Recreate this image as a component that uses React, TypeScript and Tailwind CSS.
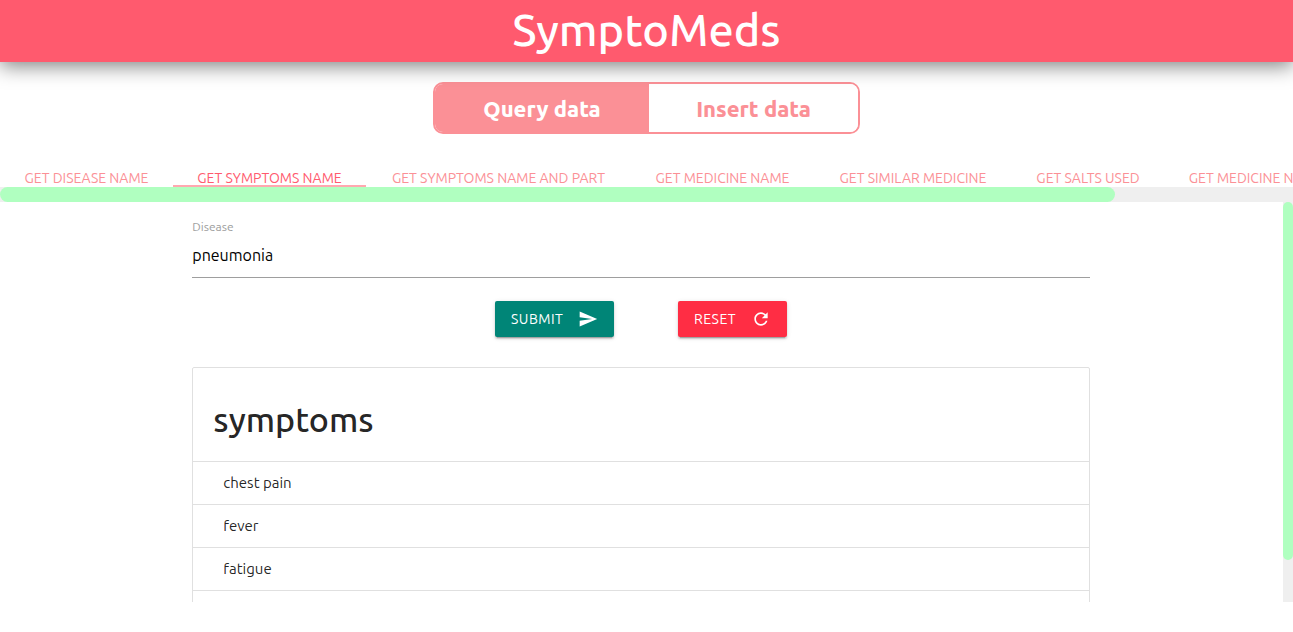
import { useState } from "react";

const tabs = [
  { label: "Get Disease Name", width: "w-[173px]" },
  { label: "Get Symptoms Name", width: "w-[193px]" },
  { label: "Get Symptoms Name and Part", width: "w-[265px]" },
  { label: "Get Medicine Name", width: "w-[183px]" },
  { label: "Get Similar Medicine", width: "w-[198px]" },
  { label: "Get Salts Used", width: "w-[152px]" },
  { label: "Get Medicine Name and Price", width: "w-[256px]" },
];

const symptoms = ["chest pain", "fever", "fatigue", "cough"];

function Header() {
  return (
    <header className="relative flex h-[62px] shrink-0 items-start justify-center bg-[#ff5a6e] shadow-[0_4px_20px_rgba(0,0,0,0.5)]">
      <h1 className="text-[45px] leading-[60px] font-medium text-white">SymptoMeds</h1>
    </header>
  );
}

function ModeSwitch() {
  return (
    <div className="mt-5 flex h-[52px] w-[427px] shrink-0 self-center overflow-hidden rounded-[10px] border-2 border-[#fb9096] text-[22px] font-extrabold">
      <button type="button" className="w-[214px] bg-[#fb9096] text-white">
        Query data
      </button>
      <button type="button" className="flex-1 bg-white text-[#fb9096]">
        Insert data
      </button>
    </div>
  );
}

function Tabs() {
  const [active, setActive] = useState(1);
  return (
    <nav className="mt-5 shrink-0">
      <ul className="flex h-[33px] overflow-hidden">
        {tabs.map((tab, i) => (
          <li key={tab.label} className={`shrink-0 ${tab.width}`}>
            <a
              href="#form"
              onClick={() => setActive(i)}
              className={`flex h-[33px] items-end justify-center border-b-2 text-sm leading-[14px] whitespace-nowrap uppercase ${
                i === active ? "border-[#ffa8b0] text-[#ff5a6e]" : "border-transparent text-[#fb9096]"
              }`}
            >
              {tab.label}
            </a>
          </li>
        ))}
      </ul>
      <div className="h-[15px] bg-[#efefef]">
        <div className="h-full w-[86.2%] rounded-[10px] bg-[#b0ffc0]" />
      </div>
    </nav>
  );
}

function QueryForm() {
  return (
    <form id="form" onSubmit={(e) => e.preventDefault()}>
      <label htmlFor="disease" className="block pt-4 text-xs leading-[18px] text-[#9e9e9e]">
        Disease
      </label>
      <input
        id="disease"
        defaultValue="pneumonia"
        className="block h-[42px] w-full border-b border-[#9e9e9e] bg-transparent pb-1 text-base text-black outline-none"
      />
      <div className="mt-[23px] flex justify-center gap-16">
        <button
          type="submit"
          className="flex h-9 w-[119px] items-center justify-between rounded-[2px] bg-[#008577] px-4 text-sm tracking-[0.5px] text-white shadow-[0_2px_2px_rgba(0,0,0,0.14),0_1px_5px_rgba(0,0,0,0.12),0_3px_1px_-2px_rgba(0,0,0,0.2)]"
        >
          SUBMIT
          <svg viewBox="0 0 24 24" className="size-[20px]" fill="currentColor" aria-hidden="true">
            <path d="M2.01 21L23 12 2.01 3 2 10l15 2-15 2z" />
          </svg>
        </button>
        <button
          type="reset"
          className="flex h-9 w-[109px] items-center justify-between rounded-[2px] bg-[#ff2d44] px-4 text-sm tracking-[0.5px] text-white shadow-[0_2px_2px_rgba(0,0,0,0.14),0_1px_5px_rgba(0,0,0,0.12),0_3px_1px_-2px_rgba(0,0,0,0.2)]"
        >
          RESET
          <svg viewBox="0 0 24 24" className="size-[20px]" fill="currentColor" aria-hidden="true">
            <path d="M17.65 6.35C16.2 4.9 14.21 4 12 4c-4.42 0-7.99 3.58-7.99 8s3.57 8 7.99 8c3.73 0 6.84-2.55 7.73-6h-2.08c-.82 2.33-3.04 4-5.65 4-3.31 0-6-2.69-6-6s2.69-6 6-6c1.66 0 3.14.69 4.22 1.78L13 11h7V4l-2.35 2.35z" />
          </svg>
        </button>
      </div>
    </form>
  );
}

function Results() {
  return (
    <section className="mt-[30px] rounded-[2px] border border-[#e0e0e0] text-[rgba(0,0,0,0.87)]">
      <h2 className="px-5 pt-[29px] pb-5 text-[34px] leading-[44px] font-medium">symptoms</h2>
      <ul>
        {symptoms.map((name) => (
          <li key={name} className="border-t border-[#e0e0e0] px-[30px] py-2.5 text-[15px] leading-[22px]">
            {name}
          </li>
        ))}
      </ul>
    </section>
  );
}

export default function App() {
  return (
    <div className="flex h-screen flex-col bg-white pb-[30px] font-['Ubuntu','Noto_Sans',sans-serif]">
      <Header />
      <ModeSwitch />
      <Tabs />
      <main className="flex min-h-0 flex-1">
        <div className="flex-1 overflow-hidden pr-px">
          <div className="mx-auto w-[70%]">
            <QueryForm />
            <Results />
          </div>
        </div>
        <div className="w-2.5 bg-[#efefef]">
          <div className="h-[89.5%] rounded-[10px] bg-[#b0ffc0]" />
        </div>
      </main>
    </div>
  );
}
